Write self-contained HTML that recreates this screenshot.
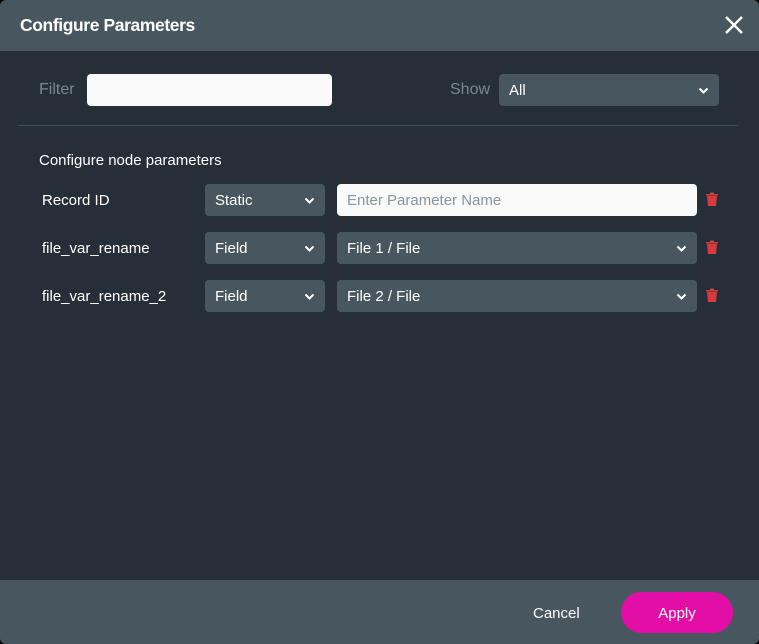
<!DOCTYPE html>
<html><head><style>
*{box-sizing:border-box;margin:0;padding:0}
body{width:759px;height:644px;background:#000;font-family:"Liberation Sans",sans-serif;overflow:hidden}
.dlg{position:absolute;left:0;top:0;width:759px;height:644px;background:#262f37;border-radius:6px;overflow:hidden}
.hd{position:absolute;left:0;top:0;width:759px;height:51px;background:#48575f}
.hd h1{position:absolute;left:20px;top:15px;font-size:17.5px;font-weight:bold;color:#fff;letter-spacing:-0.4px}
.x{position:absolute;left:724px;top:15px}
.lbl{position:absolute;font-size:16px;color:#7b868d}
.in{position:absolute;background:#fafafa;border-radius:4px}
.sel{position:absolute;background:#48575f;border-radius:4px;color:#fff;font-size:15px;padding-left:10px;line-height:34px}
.sel svg{position:absolute;right:10px;top:13px}
.t{position:absolute;color:#fff;font-size:15px}
.hr{position:absolute;left:18px;top:125px;width:720px;height:1px;background:#414c54}
.trash{position:absolute}
.ft{position:absolute;left:0;top:580px;width:759px;height:64px;background:#48575f}
.apply{position:absolute;left:621px;top:592px;width:112px;height:41px;border-radius:21px;background:#e20ea5;color:#fff;font-size:15px;text-align:center;line-height:43px}
</style></head><body>
<div class="dlg">
<div class="hd"><h1>Configure Parameters</h1>
<svg class="x" width="20" height="20" viewBox="0 0 20 20"><path d="M2 2L18 18M18 2L2 18" stroke="#fff" stroke-width="2.4"/></svg></div>
<div class="lbl" style="left:39px;top:81px">Filter</div>
<div class="in" style="left:87px;top:74px;width:245px;height:32px"></div>
<div class="lbl" style="left:450px;top:81px">Show</div>
<div class="sel" style="left:499px;top:74px;width:220px;height:32px">All<svg width="11" height="8" viewBox="0 0 11 8"><path d="M1.5 1.5L5.5 5.5L9.5 1.5" stroke="#fff" stroke-width="2" fill="none"/></svg></div>
<div class="hr"></div>
<div class="t" style="left:39px;top:152px">Configure node parameters</div>

<div class="t" style="left:42px;top:192px">Record ID</div>
<div class="sel" style="left:205px;top:184px;width:120px;height:32px">Static<svg width="11" height="8" viewBox="0 0 11 8"><path d="M1.5 1.5L5.5 5.5L9.5 1.5" stroke="#fff" stroke-width="2" fill="none"/></svg></div>
<div class="in" style="left:337px;top:184px;width:360px;height:32px;color:#8b949a;font-size:15px;padding-left:10px;line-height:34px">Enter Parameter Name</div>

<div class="t" style="left:42px;top:240px">file_var_rename</div>
<div class="sel" style="left:205px;top:232px;width:120px;height:32px">Field<svg width="11" height="8" viewBox="0 0 11 8"><path d="M1.5 1.5L5.5 5.5L9.5 1.5" stroke="#fff" stroke-width="2" fill="none"/></svg></div>
<div class="sel" style="left:337px;top:232px;width:360px;height:32px">File 1 / File<svg width="11" height="8" viewBox="0 0 11 8"><path d="M1.5 1.5L5.5 5.5L9.5 1.5" stroke="#fff" stroke-width="2" fill="none"/></svg></div>

<div class="t" style="left:42px;top:288px">file_var_rename_2</div>
<div class="sel" style="left:205px;top:280px;width:120px;height:32px">Field<svg width="11" height="8" viewBox="0 0 11 8"><path d="M1.5 1.5L5.5 5.5L9.5 1.5" stroke="#fff" stroke-width="2" fill="none"/></svg></div>
<div class="sel" style="left:337px;top:280px;width:360px;height:32px">File 2 / File<svg width="11" height="8" viewBox="0 0 11 8"><path d="M1.5 1.5L5.5 5.5L9.5 1.5" stroke="#fff" stroke-width="2" fill="none"/></svg></div>

<svg class="trash" style="left:706px;top:192px" width="12" height="14" viewBox="0 0 12 14"><path d="M0 2h12v1.5H0zM4 0.5h4v1.5H4zM1 4h10l-1 10H2z" fill="#d63a3f"/></svg>
<svg class="trash" style="left:706px;top:240px" width="12" height="14" viewBox="0 0 12 14"><path d="M0 2h12v1.5H0zM4 0.5h4v1.5H4zM1 4h10l-1 10H2z" fill="#d63a3f"/></svg>
<svg class="trash" style="left:706px;top:288px" width="12" height="14" viewBox="0 0 12 14"><path d="M0 2h12v1.5H0zM4 0.5h4v1.5H4zM1 4h10l-1 10H2z" fill="#d63a3f"/></svg>

<div class="ft"></div>
<div class="t" style="left:533px;top:605px">Cancel</div>
<div class="apply">Apply</div>
</div>
</body></html>
